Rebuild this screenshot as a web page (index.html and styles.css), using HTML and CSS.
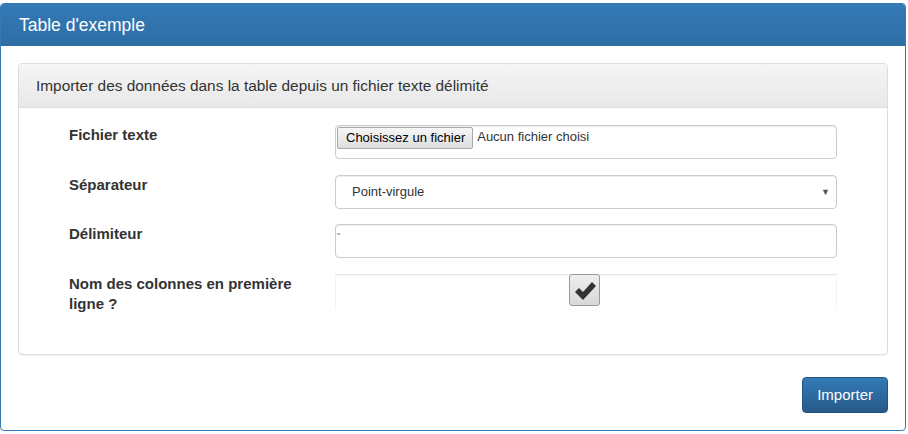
FILE: index.html
```html
<!DOCTYPE html>
<html lang="fr">
<head>
<meta charset="utf-8">
<link rel="stylesheet" href="styles.css">
</head>
<body>
<div class="panel">
  <div class="panel-heading">Table d'exemple</div>
  <div class="panel-body">
    <div class="sub-panel">
      <div class="sub-heading">Importer des données dans la table depuis un fichier texte délimité</div>
      <div class="sub-body">
        <div class="row">
          <div class="label">Fichier texte</div>
          <div class="control file">
            <span class="file-btn">Choisissez un fichier</span>
            <span class="file-name">Aucun fichier choisi</span>
          </div>
        </div>
        <div class="row">
          <div class="label">Séparateur</div>
          <div class="control select">
            <span>Point-virgule</span>
            <span class="arrow">▼</span>
          </div>
        </div>
        <div class="row">
          <div class="label">Délimiteur</div>
          <div class="control text"><span class="quote">"</span></div>
        </div>
        <div class="row">
          <div class="label">Nom des colonnes en première ligne ?</div>
          <div class="check-wrap">
            <span class="check">
              <svg width="26" height="26" viewBox="0 0 26 26"><path d="M3 15 L7 11 L11 15 L20 5 L24 9 L11 23 Z" fill="#333"/></svg>
            </span>
          </div>
        </div>
      </div>
    </div>
    <div class="actions">
      <button class="btn">Importer</button>
    </div>
  </div>
</div>
</body>
</html>
```
FILE: styles.css
```css
html, body {
  margin: 0;
  padding: 0;
  background: #fff;
}
body {
  font-family: "Liberation Sans", Arial, sans-serif;
  font-size: 15px;
  line-height: 20px;
  color: #333;
}
.panel {
  margin-top: 3px;
  width: 904px;
  border: 1px solid #337ab7;
  border-radius: 4px;
  height: 426px;
  box-sizing: content-box;
}
.panel-heading {
  background: linear-gradient(#337ab7, #2e6da4);
  color: #fff;
  font-size: 17.5px;
  line-height: 20px;
  padding: 11px 18px 11px 18px;
  border-radius: 3px 3px 0 0;
}
.panel-body {
  padding: 17px;
}
.sub-panel {
  border: 1px solid #ddd;
  border-radius: 4px;
  box-shadow: 0 1px 1px rgba(0,0,0,.05);
}
.sub-heading {
  background: linear-gradient(#f5f5f5, #e8e8e8);
  border-bottom: 1px solid #ddd;
  padding: 12px 17px 11px;
  border-radius: 3px 3px 0 0;
  font-size: 15.4px;
}
.sub-body {
  padding: 17px 49px 40px 50px;
}
.row {
  display: grid;
  grid-template-columns: 266px 502px;
  margin-bottom: 15.5px;
}
.row:last-child { margin-bottom: 0; }
.label {
  font-weight: bold;
  padding-top: 0;
  padding-right: 20px;
}
.control {
  height: 34px;
  box-sizing: border-box;
  border: 1px solid #ccc;
  border-radius: 4px;
  box-shadow: inset 0 1px 1px rgba(0,0,0,.075);
  display: flex;
  align-items: flex-start;
}
.file {
  padding: 1px;
  font-size: 13px;
  line-height: 18px;
}
.file-btn {
  border: 1px solid #a9a9a9;
  border-radius: 2px;
  background: linear-gradient(#f6f6f6, #dedede);
  color: #000;
  padding: 1px 7px 1px 8px;
  height: 22px;
  box-sizing: border-box;
  line-height: 18px;
}
.file-name {
  padding-left: 4px;
  line-height: 20px;
  color: #333;
}
.select {
  align-items: center;
  justify-content: space-between;
  padding: 0 6px 0 16px;
  font-size: 13px;
}
.arrow {
  font-size: 9px;
  color: #555;
}
.text {
  padding: 7px 1px;
}
.quote {
  font-size: 9px;
  line-height: 9px;
  color: #6a6a8a;
}
.check-wrap {
  border: 1px solid #f4f4f4;
  border-top: 1px solid #e6e6e6;
  border-bottom: none;
  box-shadow: inset 0 1px 1px rgba(0,0,0,.03);
  height: 34px;
  display: flex;
  justify-content: center;
}
.check {
  width: 31px;
  height: 32px;
  box-sizing: border-box;
  border: 1px solid #999;
  border-radius: 3px;
  background: linear-gradient(#eee, #d8d8d8);
  display: flex;
  align-items: center;
  justify-content: center;
  margin-top: -1px;
  margin-right: 3px;
}
.actions {
  display: flex;
  justify-content: flex-end;
  padding-top: 22px;
}
.btn {
  font-family: "Liberation Sans", Arial, sans-serif;
  font-size: 15px;
  color: #fff;
  background: linear-gradient(#337ab7, #265a88);
  border: 1px solid #245580;
  border-radius: 4px;
  padding: 8px 14px;
  line-height: 18px;
  height: 36px;
}
```
